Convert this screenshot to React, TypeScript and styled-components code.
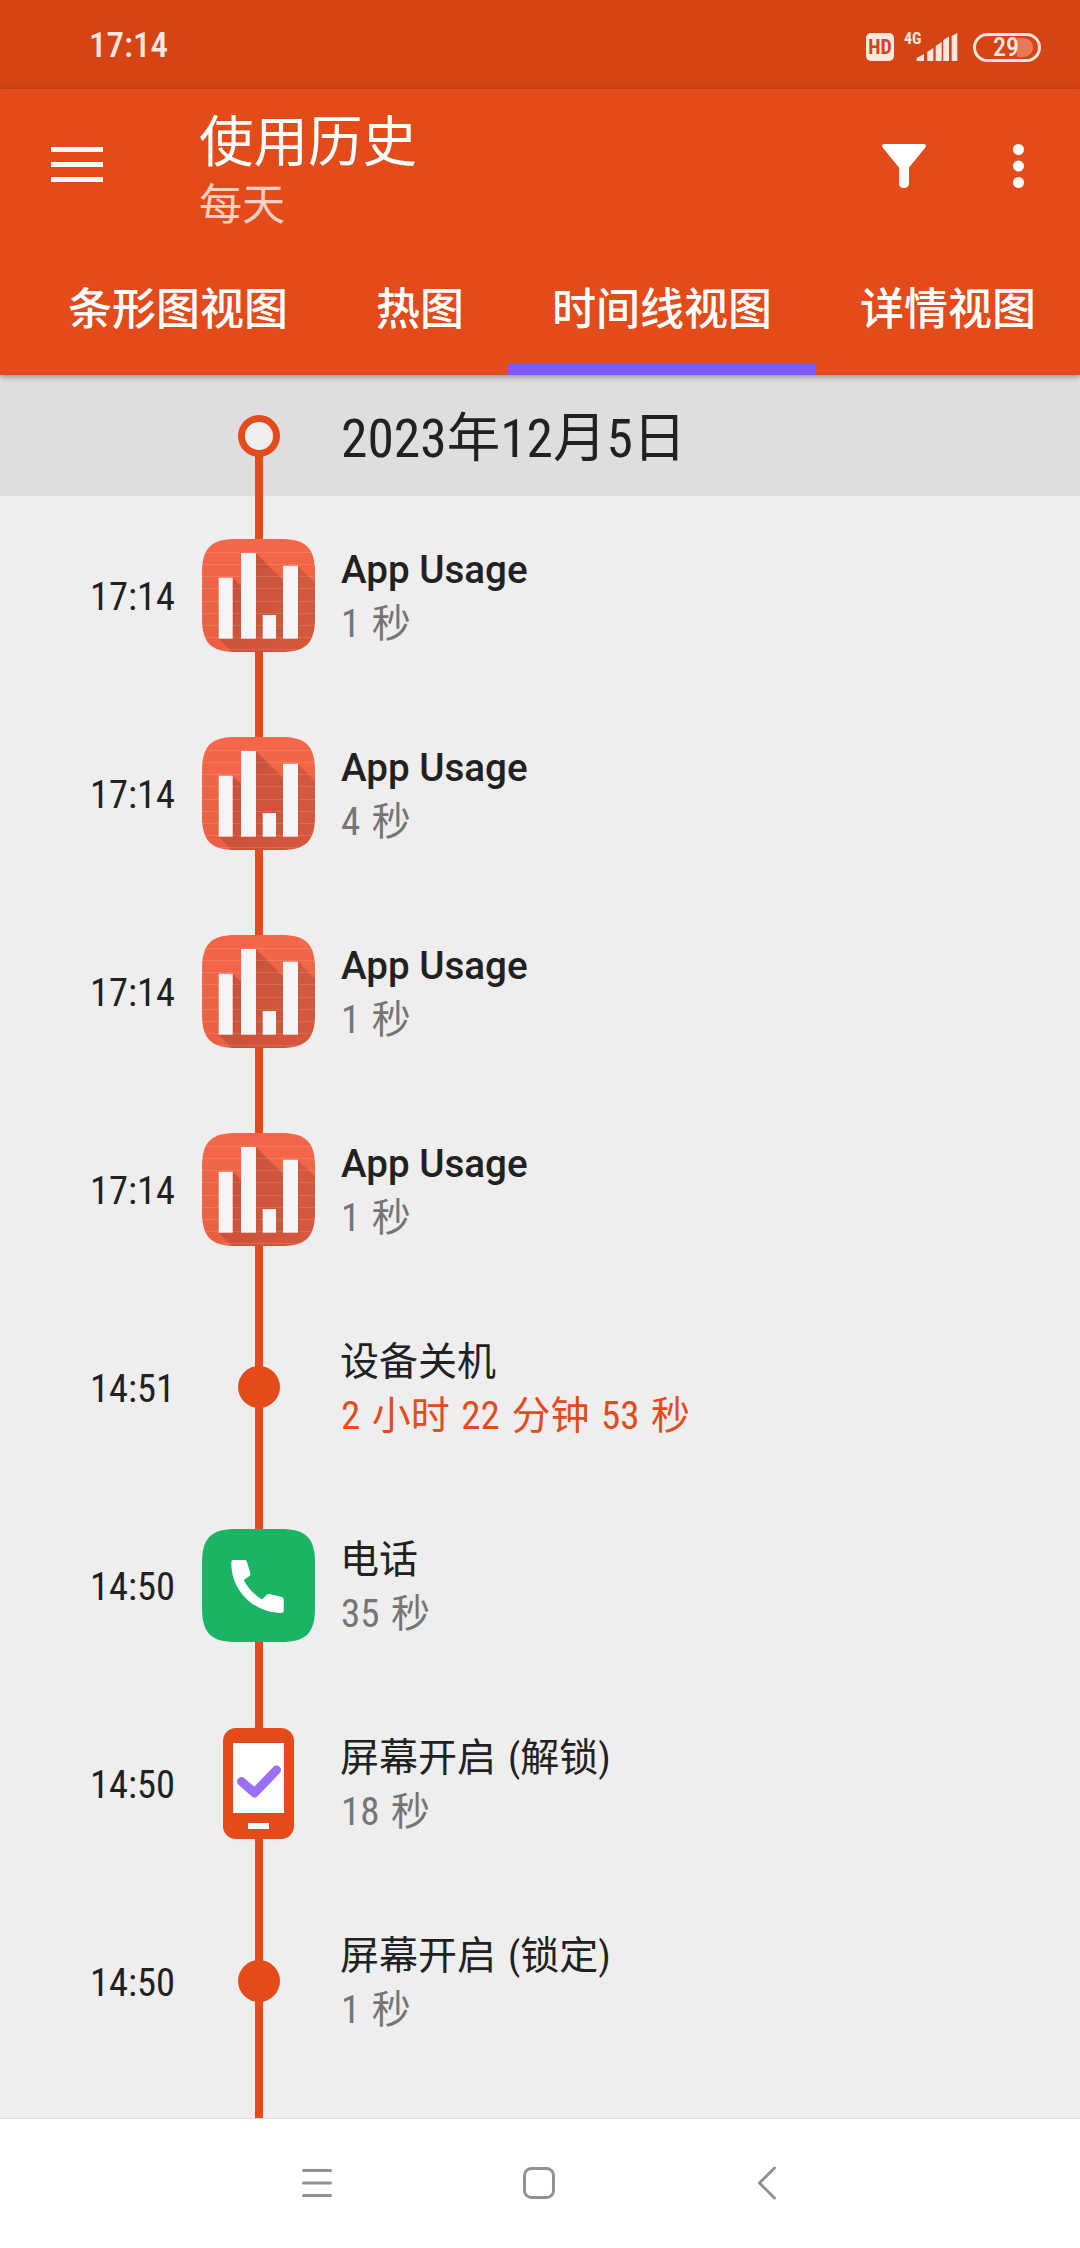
import React from "react";
import styled, { createGlobalStyle } from "styled-components";

const ORANGE = "#E44B1A";

const Global = createGlobalStyle`
  html, body { margin: 0; padding: 0; background: #eee; }
  body { font-family: Roboto, "Noto Sans CJK SC", sans-serif; font-stretch: 87%; }
`;
const Page = styled.div`
  width: 1080px; height: 2248px; display: flex; flex-direction: column; overflow: hidden; background: #eeeeee;
`;
const StatusBar = styled.div`
  height: 89px; flex: none; background: #D54414; display: flex; align-items: center;
  padding: 0 39px 0 89px; justify-content: space-between; color: #FFE7DF;
`;
const Clock = styled.span`font-size: 35px; font-weight: 500; line-height: 1; position: relative; top: 1px;`;
const StatusIcons = styled.svg`display: block; margin-top: 7px; overflow: visible;`;
const AppBar = styled.header`
  flex: none; height: 286px; background: ${ORANGE}; display: flex; flex-direction: column;
  position: relative; z-index: 2; box-shadow: 0 2px 6px rgba(0,0,0,.35); color: #fff;
`;
const Toolbar = styled.div`height: 186px; display: flex; align-items: flex-start; flex: none;`;
const Menu = styled.svg`margin: 58px 0 0 51px; flex: none;`;
const TitleBlock = styled.div`margin: 19px 0 0 96px; flex: 1;`;
const Title = styled.div`font-size: 54.5px; line-height: 68px;`;
const Subtitle = styled.div`font-size: 43px; line-height: 50px; color: #FFCFC1; margin-top: 4px;`;
const FilterIcon = styled.svg`margin: 55px 0 0 0; flex: none;`;
const DotsIcon = styled.svg`margin: 55px 56px 0 87px; flex: none;`;
const Tabs = styled.nav`flex: 1; display: flex; padding-left: 24px;`;
const Tab = styled.div<{ $active?: boolean }>`
  padding: 0 44px; font-size: 44px; font-weight: 500; height: 100px; line-height: 70px; white-space: nowrap;
  box-sizing: border-box;
  border-bottom: 11px solid ${(p) => (p.$active ? "#7E57FF" : "transparent")};
`;
const DateHeader = styled.div`
  flex: none; height: 121px; background: #DEDEDE; display: grid; grid-template-columns: 90px 112px 113px 1fr;
`;
const HeaderRail = styled.div`
  grid-column: 3; display: flex; align-items: center; justify-content: center;
  background: linear-gradient(${ORANGE}, ${ORANGE}) center bottom / 8px 50% no-repeat;
`;
const Ring = styled.div`
  width: 42px; height: 42px; box-sizing: border-box; border-radius: 50%; border: 7px solid ${ORANGE}; background: #EEEEEE;
`;
const DateText = styled.div`
  grid-column: 4; padding-left: 26px; font-size: 53.5px; color: #212121; display: flex; align-items: center; margin-top: -4px;
`;
const Timeline = styled.main`flex: 1; display: flex; flex-direction: column; min-height: 0;`;
const Row = styled.div`
  height: 198px; flex: none; display: grid; grid-template-columns: 90px 112px 113px 1fr; align-items: stretch;
`;
const TimeLabel = styled.div`
  grid-column: 2; display: flex; align-items: center; font-size: 38.5px; color: #212121; padding-top: 3px;
`;
const Rail = styled.div`
  grid-column: 3; display: flex; align-items: center; justify-content: center;
  background: linear-gradient(${ORANGE}, ${ORANGE}) center / 8px 100% no-repeat;
`;
const Dot = styled.div`width: 42px; height: 42px; border-radius: 50%; background: ${ORANGE};`;
const Texts = styled.div`
  grid-column: 4; padding-left: 26px; display: flex; flex-direction: column; justify-content: center; padding-top: 3px;
`;
const RowTitle = styled.div<{ $latin?: boolean }>`
  font-size: ${(p) => (p.$latin ? "38.6px" : "39px")}; line-height: 54px; color: #212121; font-weight: ${(p) => (p.$latin ? 500 : 400)};
  font-stretch: ${(p) => (p.$latin ? "100%" : "87%")}; word-spacing: ${(p) => (p.$latin ? 0 : "3px")}; margin-left: ${(p) => (p.$latin ? 0 : "-1px")};
`;
const RowSub = styled.div<{ $accent?: boolean }>`
  font-size: 39px; line-height: 54px; word-spacing: 2.6px; color: ${(p) => (p.$accent ? ORANGE : "#757575")};
`;
const Tail = styled.div`
  flex: 1; display: grid; grid-template-columns: 90px 112px 113px 1fr;
`;
const NavBar = styled.footer`
  flex: none; height: 130px; box-sizing: border-box; background: #fff; border-top: 1px solid #DEDEDE;
  display: flex; align-items: center; padding-bottom: 2px;
`;
const NavIcon = styled.svg<{ $left: number }>`margin-left: ${(p) => p.$left}px; flex: none; display: block;`;

const squircle = "M34 0H79C104 0 113 9 113 34V79C113 104 104 113 79 113H34C9 113 0 104 0 79V34C0 9 9 0 34 0Z";

const AppUsageIcon = ({ id }: { id: string }) => (
  <svg width="113" height="113" viewBox="0 0 113 113" style={{ display: "block" }}>
    <defs>
      <clipPath id={`clip-${id}`}><path d={squircle} /></clipPath>
      <linearGradient id={`base-${id}`} x1="0" y1="0" x2="0" y2="1">
        <stop offset="0" stopColor="#F56749" />
        <stop offset="1" stopColor="#EA5F42" />
      </linearGradient>
      <linearGradient id={`shade-${id}`} x1="0" y1="0" x2="1" y2="1">
        <stop offset="0" stopColor="#000" stopOpacity=".2" />
        <stop offset="1" stopColor="#000" stopOpacity=".08" />
      </linearGradient>
    </defs>
    <g clipPath={`url(#clip-${id})`}>
      <rect width="113" height="113" fill={`url(#base-${id})`} />
      <path d="M54 14L81 41V27H96L113 44V113H30L17 100L31 39L39 47V14Z" fill={`url(#shade-${id})`} />
      {[13, 25, 37, 49, 62, 74, 86, 98, 110].map((y) => (
        <rect key={y} x="0" y={y} width="113" height="1" fill="#fff" opacity=".13" />
      ))}
      <rect x="16.7" y="38.7" width="14" height="61" fill="#F5F5F5" />
      <rect x="39" y="14" width="15" height="85.7" fill="#F5F5F5" />
      <rect x="60.7" y="76" width="13.3" height="23.7" fill="#F5F5F5" />
      <rect x="81" y="26.7" width="15" height="73" fill="#F5F5F5" />
    </g>
  </svg>
);

const PhoneIcon = () => (
  <svg width="113" height="113" viewBox="0 0 113 113" style={{ display: "block" }}>
    <path d={squircle} fill="#1BB364" />
    <path
      d="M31 31H43Q44.5 31 45 33L48.3 44Q48.7 46 47.5 47L41.7 51Q48 63 60 70.5L65 65.5Q66 64.8 67.5 65L80 68Q81.7 68.5 81.7 70.5V82Q81.7 84 79.5 84C52 84 29.3 62 29.3 34Q29.3 31 31 31Z"
      fill="#fff"
    />
  </svg>
);

const ScreenIcon = () => (
  <svg width="113" height="113" viewBox="0 0 113 113" style={{ display: "block" }}>
    <rect x="21" y="1" width="71" height="111" rx="13" fill={ORANGE} />
    <rect x="31" y="16" width="51" height="70" fill="#fff" />
    <rect x="46" y="96" width="21" height="6" fill="#fff" />
    <path d="M39.5 54.5L52.5 66L74.5 43" fill="none" stroke="#9C6FF5" strokeWidth="9" strokeLinecap="round" strokeLinejoin="round" />
  </svg>
);

type Item = { time: string; title: string; sub: string; kind: "app" | "dot" | "phone" | "screen"; accent?: boolean; latin?: boolean };

const items: Item[] = [
  { time: "17:14", title: "App Usage", sub: "1 秒", kind: "app", latin: true },
  { time: "17:14", title: "App Usage", sub: "4 秒", kind: "app", latin: true },
  { time: "17:14", title: "App Usage", sub: "1 秒", kind: "app", latin: true },
  { time: "17:14", title: "App Usage", sub: "1 秒", kind: "app", latin: true },
  { time: "14:51", title: "设备关机", sub: "2 小时 22 分钟 53 秒", kind: "dot", accent: true },
  { time: "14:50", title: "电话", sub: "35 秒", kind: "phone" },
  { time: "14:50", title: "屏幕开启 (解锁)", sub: "18 秒", kind: "screen" },
  { time: "14:50", title: "屏幕开启 (锁定)", sub: "1 秒", kind: "dot" },
];

const glyph = (k: Item["kind"], i: number) =>
  k === "app" ? <AppUsageIcon id={String(i)} /> : k === "phone" ? <PhoneIcon /> : k === "screen" ? <ScreenIcon /> : <Dot />;

export default function App() {
  return (
    <Page>
      <Global />
      <StatusBar>
        <Clock>17:14</Clock>
        <StatusIcons width="175" height="30" viewBox="0 0 175 30">
          <rect x="0" y="0" width="28" height="28" rx="5" fill="#FFE7DF" />
          <text x="14" y="21" textAnchor="middle" fontSize="20" fontWeight="700" fontFamily="Roboto" fill="#D54414">HD</text>
          <text x="38" y="11" fontSize="16" fontWeight="700" fontFamily="Roboto" fill="#FFE7DF">4G</text>
          <path d="M50.7 28V25L58 21V28ZM61.3 28V19L67.3 15V28ZM69.7 28V13L75.7 9V28ZM77.3 28V7L83 3.5V28ZM85.7 28V3L91.3 0V28Z" fill="#FFE7DF" />
          <rect x="108.5" y="1.5" width="65" height="26" rx="13" fill="none" stroke="#FFE7DF" strokeWidth="3" />
          <path d="M151 5H157C162.5 5 167 9 167 14.5C167 20 162.5 24 157 24H151Z" fill="#E8785A" />
          <text x="140" y="23" textAnchor="middle" fontSize="26" fontWeight="500" fontFamily="Roboto" fill="#FFE7DF">29</text>
        </StatusIcons>
      </StatusBar>
      <AppBar>
        <Toolbar>
          <Menu width="52" height="35" viewBox="0 0 52 35">
            <rect width="52" height="5" y="0" fill="#fff" />
            <rect width="52" height="5" y="15" fill="#fff" />
            <rect width="52" height="5" y="30" fill="#fff" />
          </Menu>
          <TitleBlock>
            <Title>使用历史</Title>
            <Subtitle>每天</Subtitle>
          </TitleBlock>
          <FilterIcon width="44" height="44" viewBox="0 0 44 44">
            <path d="M2.5 0H41.5C43.8 0 44.6 1.6 43.4 3.4L27 23.5V39C27 42.5 25 44 22 44C19 44 17 42.5 17 39V23.5L.6 3.4C-.6 1.6.2 0 2.5 0Z" fill="#fff" />
          </FilterIcon>
          <DotsIcon width="11" height="44" viewBox="0 0 11 44">
            <circle cx="5.5" cy="5.5" r="5.5" fill="#fff" />
            <circle cx="5.5" cy="22" r="5.5" fill="#fff" />
            <circle cx="5.5" cy="38.5" r="5.5" fill="#fff" />
          </DotsIcon>
        </Toolbar>
        <Tabs>
          <Tab>条形图视图</Tab>
          <Tab>热图</Tab>
          <Tab $active>时间线视图</Tab>
          <Tab>详情视图</Tab>
        </Tabs>
      </AppBar>
      <DateHeader>
        <HeaderRail><Ring /></HeaderRail>
        <DateText>2023年12月5日</DateText>
      </DateHeader>
      <Timeline>
        {items.map((it, i) => (
          <Row key={i}>
            <TimeLabel>{it.time}</TimeLabel>
            <Rail>{glyph(it.kind, i)}</Rail>
            <Texts>
              <RowTitle $latin={it.latin}>{it.title}</RowTitle>
              <RowSub $accent={it.accent}>{it.sub}</RowSub>
            </Texts>
          </Row>
        ))}
        <Tail><Rail /></Tail>
      </Timeline>
      <NavBar>
        <NavIcon $left={302} width="30" height="30" viewBox="0 0 30 30">
          <g stroke="#919191" strokeWidth="3" strokeLinecap="round">
            <path d="M1.5 2.5H28.5M1.5 15H28.5M1.5 27.5H28.5" />
          </g>
        </NavIcon>
        <NavIcon $left={191} width="32" height="32" viewBox="0 0 32 32">
          <rect x="1.5" y="1.5" width="29" height="29" rx="7" fill="none" stroke="#919191" strokeWidth="3" />
        </NavIcon>
        <NavIcon $left={202} width="20" height="34" viewBox="0 0 20 34">
          <path d="M17.5 2L2.5 17L17.5 32" fill="none" stroke="#919191" strokeWidth="3" strokeLinecap="round" strokeLinejoin="round" />
        </NavIcon>
      </NavBar>
    </Page>
  );
}
